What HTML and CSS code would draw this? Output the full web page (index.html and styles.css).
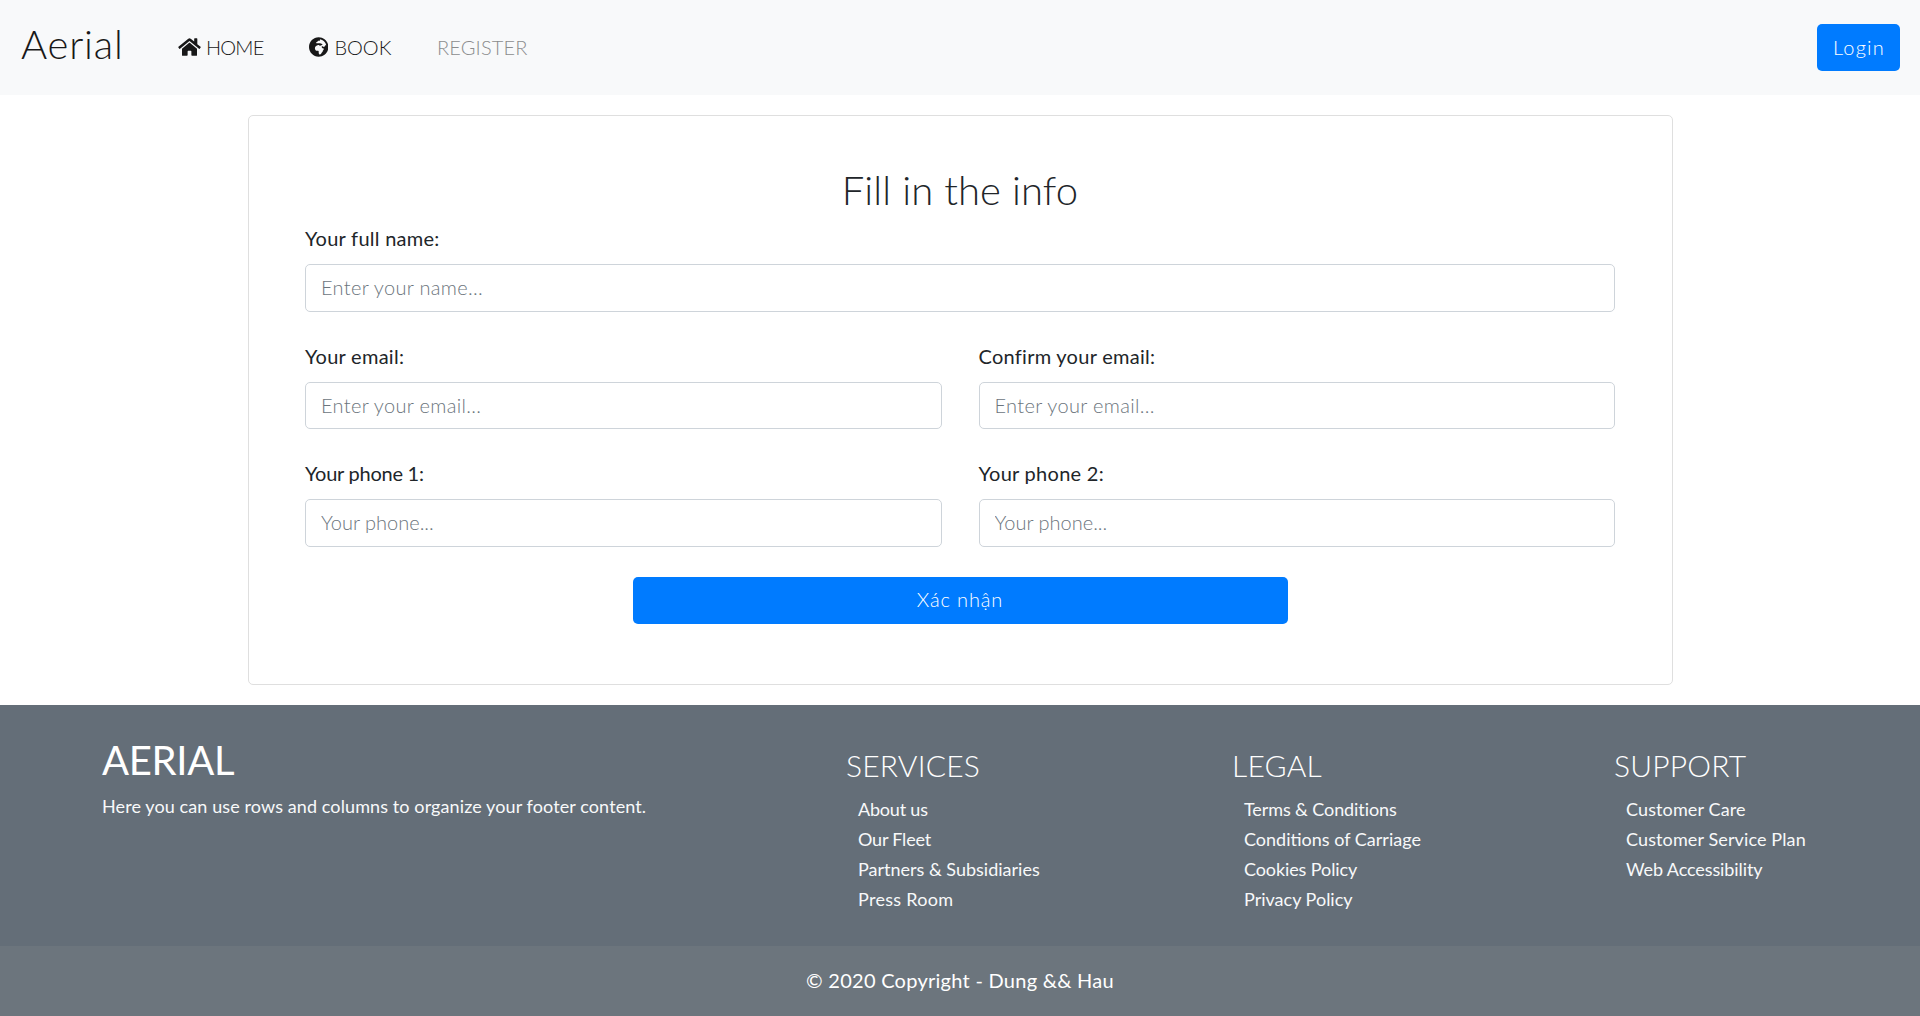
FILE: index.html
```html
<!DOCTYPE html>
<html lang="en">
<head>
<meta charset="utf-8">
<title>Aerial - Register</title>
<link rel="stylesheet" href="styles.css">
</head>
<body>
<nav class="navbar">
  <a class="brand">Aerial</a>
  <div class="links">
    <a class="nav-link home"><svg class="icon-home" viewBox="0 0 576 512"><path d="M280.37 148.26L96 300.11V464a16 16 0 0 0 16 16l112.06-.29a16 16 0 0 0 15.92-16V368a16 16 0 0 1 16-16h64a16 16 0 0 1 16 16v95.64a16 16 0 0 0 16 16.05L464 480a16 16 0 0 0 16-16V300L295.67 148.26a12.19 12.19 0 0 0-15.3 0zM571.6 251.47L488 182.56V44.05a12 12 0 0 0-12-12h-56a12 12 0 0 0-12 12v72.61L318.47 43a48 48 0 0 0-61 0L4.34 251.47a12 12 0 0 0-1.6 16.9l25.5 31A12 12 0 0 0 45.15 301l235.22-193.74a12.19 12.19 0 0 1 15.3 0L530.9 301a12 12 0 0 0 16.9-1.6l25.5-31a12 12 0 0 0-1.7-16.93z"/></svg><span>HOME</span></a>
    <a class="nav-link book"><svg class="icon-globe" viewBox="0 0 496 512"><path d="M248 8C111.03 8 0 119.03 0 256s111.03 248 248 248 248-111.03 248-248S384.97 8 248 8zm160 215.5v6.93c0 5.87-3.32 11.24-8.57 13.86l-15.39 7.7a15.485 15.485 0 0 1-15.53-.97l-18.21-12.14a15.52 15.52 0 0 0-13.5-1.81l-2.65.88c-9.7 3.23-13.66 14.79-7.99 23.3l13.24 19.86c2.87 4.31 7.71 6.9 12.89 6.9h8.21c8.56 0 15.5 6.94 15.5 15.5v11.34c0 3.35-1.09 6.62-3.1 9.3l-18.74 24.98c-1.42 1.9-2.39 4.1-2.83 6.43l-4.3 22.83c-.62 3.29-2.29 6.29-4.76 8.56a159.608 159.608 0 0 0-25 29.16l-13.03 19.55a27.756 27.756 0 0 1-23.09 12.36c-10.51 0-20.12-5.94-24.82-15.34a78.902 78.902 0 0 1-8.33-35.29V367.5c0-8.56-6.94-15.5-15.5-15.5h-25.88c-14.49 0-28.38-5.76-38.63-16a54.659 54.659 0 0 1-16-38.63v-14.06c0-17.19 8.1-33.38 21.85-43.7l27.58-20.69a54.663 54.663 0 0 1 32.78-10.93h.89c8.48 0 16.85 1.97 24.43 5.77l14.72 7.36c3.68 1.84 7.93 2.14 11.83.84l47.31-15.77c6.33-2.11 10.6-8.03 10.6-14.7 0-8.56-6.94-15.5-15.5-15.5h-10.09c-4.11 0-8.05-1.63-10.96-4.54l-6.92-6.92a15.493 15.493 0 0 0-10.96-4.54H199.5c-8.56 0-15.5-6.94-15.5-15.5v-4.4c0-7.11 4.84-13.31 11.74-15.04l14.45-3.61c3.74-.94 7-3.23 9.14-6.44l8.08-12.11c2.87-4.31 7.71-6.9 12.89-6.9h24.21c8.56 0 15.5-6.94 15.5-15.5v-21.7C359.23 71.63 422.86 131.02 441.93 208H423.5c-8.56 0-15.5 6.94-15.5 15.5z"/></svg><span>BOOK</span></a>
    <a class="nav-link register">REGISTER</a>
  </div>
  <button class="btn login" type="button">Login</button>
</nav>

<main class="card">
  <h1 class="title">Fill in the info</h1>
  <form class="form">
    <div class="field wide">
      <label class="label" for="name">Your full name:</label>
      <input class="input" id="name" placeholder="Enter your name...">
    </div>
    <div class="field">
      <label class="label" for="email">Your email:</label>
      <input class="input" id="email" placeholder="Enter your email...">
    </div>
    <div class="field">
      <label class="label" for="email2">Confirm your email:</label>
      <input class="input" id="email2" placeholder="Enter your email...">
    </div>
    <div class="field phone">
      <label class="label tight" for="phone1">Your phone 1:</label>
      <input class="input" id="phone1" placeholder="Your phone...">
    </div>
    <div class="field phone">
      <label class="label" for="phone2">Your phone 2:</label>
      <input class="input" id="phone2" placeholder="Your phone...">
    </div>
    <button class="btn submit" type="button">Xác nhận</button>
  </form>
</main>

<footer class="footer">
  <div class="columns">
    <section class="about">
      <h2 class="footer-brand">AERIAL</h2>
      <p class="description">Here you can use rows and columns to organize your footer content.</p>
    </section>
    <section class="column services">
      <h3 class="heading">SERVICES</h3>
      <ul class="list">
        <li class="snug">About us</li>
        <li class="snug">Our Fleet</li>
        <li>Partners &amp; Subsidiaries</li>
        <li class="loose">Press Room</li>
      </ul>
    </section>
    <section class="column legal">
      <h3 class="heading">LEGAL</h3>
      <ul class="list">
        <li class="close">Terms &amp; Conditions</li>
        <li>Conditions of Carriage</li>
        <li class="close">Cookies Policy</li>
        <li>Privacy Policy</li>
      </ul>
    </section>
    <section class="column support">
      <h3 class="heading">SUPPORT</h3>
      <ul class="list">
        <li class="open">Customer Care</li>
        <li class="open">Customer Service Plan</li>
        <li class="close">Web Accessibility</li>
      </ul>
    </section>
  </div>
  <div class="copyright">© 2020 Copyright - Dung &amp;&amp; Hau</div>
</footer>
</body>
</html>
```
FILE: styles.css
```css
* { box-sizing: border-box; }

body {
  margin: 0;
  background: #fff;
  color: #212529;
  font: 300 20px/30px Lato, "Open Sans", sans-serif;
}

h1, h2, h3, p, ul { margin: 0; padding: 0; font-weight: 300; }

/* Navigation */
.navbar {
  display: flex;
  align-items: center;
  height: 95px;
  padding: 0 20px 0 21px;
  background: #f8f9fa;
}
.brand {
  width: 157px;
  padding-bottom: 8px;
  color: #181818;
  font-size: 40px;
  line-height: 60px;
  letter-spacing: .8px;
}
.links { display: flex; flex: 1; padding-bottom: 1px; }
.nav-link { display: flex; align-items: center; color: #181818; }
.icon-home { width: 23px; height: 20px; fill: #181818; }
.icon-globe { width: 19.4px; height: 20px; fill: #181818; }
.home { width: 131px; gap: 5px; letter-spacing: -.8px; }
.book { width: 128px; gap: 6px; }
.register { color: #8b8c8d; letter-spacing: .15px; }

.btn {
  height: 47px;
  padding: 0 0 2px;
  border: 0;
  border-radius: 5px;
  background: #007bff;
  color: #fff;
  font: inherit;
}
.login { width: 83px; padding-left: 1px; letter-spacing: 1.2px; }

/* Form card */
.card {
  width: 1425px;
  height: 570px;
  margin: 20px 247px 20px 248px;
  padding: 50px 57px 50px 56px;
  border: 1px solid #dfdfdf;
  border-radius: 5px;
}
.title {
  margin-bottom: 9px;
  font-size: 40px;
  line-height: 48px;
  letter-spacing: .1px;
  text-align: center;
}
.form {
  display: grid;
  grid-template-columns: 1fr 1fr;
  gap: 29px 37px;
}
.wide { grid-column: 1 / 3; }
.label {
  display: block;
  margin-bottom: 11px;
  font-weight: 400;
  letter-spacing: .27px;
}
.tight { letter-spacing: -.25px; }
.input {
  display: block;
  width: 100%;
  height: 47.5px;
  padding: 0 15px 1px;
  border: 1px solid #ced4da;
  border-radius: 5px;
  background: #fff;
  font: inherit;
  letter-spacing: .32px;
}
.phone .input { letter-spacing: 0; }
.input::placeholder { color: #6c757d; opacity: 1; }
.submit {
  grid-column: 1 / 3;
  justify-self: center;
  width: 655px;
  margin-top: 1px;
  letter-spacing: .85px;
}

/* Footer */
.footer { background: #6c757d; color: #fff; }
.columns {
  display: flex;
  height: 241px;
  padding: 31px 0 0 102px;
  background: #646e78;
}
.about { width: 744px; }
.footer-brand {
  font-size: 40px;
  font-weight: 400;
  line-height: 48px;
  letter-spacing: -.3px;
}
.description {
  margin-top: 9px;
  color: #f8f9fa;
  font-size: 18px;
  font-weight: 400;
  line-height: 27px;
  letter-spacing: .1px;
}
.column { padding-top: 11px; }
.services { width: 386px; }
.legal { width: 382px; }
.heading {
  margin-bottom: 11px;
  font-size: 30px;
  line-height: 36px;
  letter-spacing: .2px;
}
.list {
  padding-left: 12px;
  color: #f8f9fa;
  font-size: 18px;
  font-weight: 400;
  list-style: none;
}
.snug { letter-spacing: -.2px; }
.close { letter-spacing: -.1px; }
.loose { letter-spacing: .3px; }
.open { letter-spacing: .12px; }
.copyright {
  padding: 19px 0 21px;
  font-weight: 400;
  letter-spacing: .27px;
  text-align: center;
}
```
